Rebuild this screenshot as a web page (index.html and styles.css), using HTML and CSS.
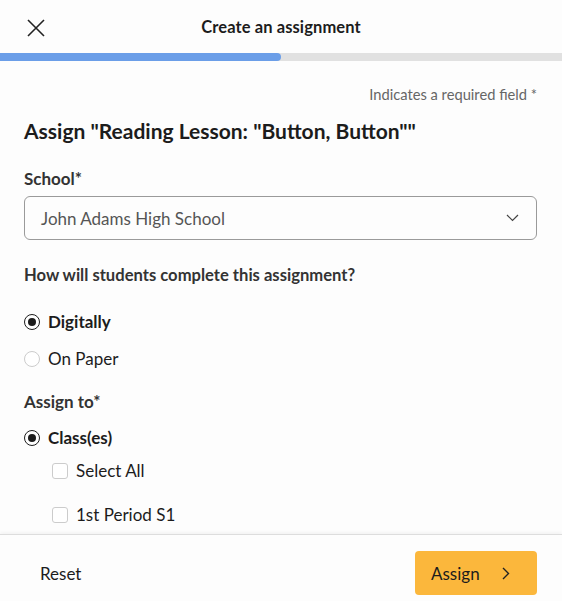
FILE: index.html
```html
<!DOCTYPE html>
<html lang="en">
<head>
<meta charset="utf-8">
<title>Create an assignment</title>
<link rel="stylesheet" href="styles.css">
</head>
<body>
<div class="modal">
  <header class="topbar">
    <button class="close" aria-label="Close">
      <svg width="18" height="18" viewBox="0 0 18 18"><path d="M1 1L17 17M17 1L1 17" stroke="#222" stroke-width="1.6" fill="none"/></svg>
    </button>
    <h1 class="title">Create an assignment</h1>
  </header>
  <div class="progress"><div class="progress-fill" style="width:50%"></div></div>
  <main class="content">
    <p class="required-note">Indicates a required field *</p>
    <h2 class="heading">Assign "Reading Lesson: "Button, Button""</h2>
    <div class="field">
      <label class="label">School*</label>
      <div class="select">
        <span>John Adams High School</span>
        <svg width="13" height="8" viewBox="0 0 13 8"><path d="M1 1L6.5 6.5L12 1" stroke="#444" stroke-width="1.2" fill="none"/></svg>
      </div>
    </div>
    <p class="question">How will students complete this assignment?</p>
    <div class="radio-row"><span class="radio checked"></span><span class="opt bold">Digitally</span></div>
    <div class="radio-row"><span class="radio"></span><span class="opt">On Paper</span></div>
    <p class="label assign-to">Assign to*</p>
    <div class="radio-row"><span class="radio checked"></span><span class="opt bold">Class(es)</span></div>
    <div class="check-row"><span class="check"></span><span class="opt">Select All</span></div>
    <div class="check-row"><span class="check"></span><span class="opt">1st Period S1</span></div>
  </main>
  <footer class="footer">
    <button class="reset">Reset</button>
    <button class="assign">Assign
      <svg width="8" height="13" viewBox="0 0 8 13"><path d="M1 1L6.5 6.5L1 12" stroke="#222" stroke-width="1.4" fill="none"/></svg>
    </button>
  </footer>
</div>
</body>
</html>
```
FILE: styles.css
```css
* { box-sizing: border-box; }
html, body { margin: 0; padding: 0; }
body {
  font-family: Lato, "Open Sans", sans-serif;
  color: #1c1c1c;
  background: #fdfdfd;
  width: 562px;
  height: 601px;
  overflow: hidden;
}
.modal { display: flex; flex-direction: column; height: 601px; }
.topbar {
  height: 53px;
  position: relative;
  display: flex;
  align-items: center;
  justify-content: center;
}
.close {
  position: absolute;
  left: 27px;
  top: 19px;
  padding: 0;
  border: 0;
  background: none;
  width: 18px;
  height: 18px;
  display: flex;
}
.title { margin: 0; font-size: 16.5px; font-weight: 700; letter-spacing: 0.1px; }
.progress { height: 8px; background: #e1e1e1; }
.progress-fill { height: 100%; background: #6b9ee8; border-radius: 0 4px 4px 0; }
.content { flex: 1; padding: 0 25px 0 24px; overflow: hidden; }
.required-note {
  margin: 24px 0 0;
  text-align: right;
  font-size: 14.7px;
  color: #666;
  line-height: 18px;
}
.heading { margin: 16px 0 0; font-size: 21px; font-weight: 700; line-height: 24px; }
.field { margin-top: 26px; }
.label { display: block; font-size: 17px; font-weight: 700; color: #333; line-height: 20px; margin: 0; }
.select {
  margin-top: 7px;
  height: 44px;
  border: 1px solid #9a9a9a;
  border-radius: 6px;
  display: flex;
  align-items: center;
  justify-content: space-between;
  padding: 0 17px 0 16px;
  font-size: 17px;
  color: #555;
}
.question { margin: 25px 0 0; font-size: 16.6px; font-weight: 700; color: #333; line-height: 20px; }
.radio-row, .check-row { display: flex; align-items: center; gap: 8px; height: 20px; }
.radio-row { margin-top: 17px; }
.question + .radio-row { margin-top: 27px; }
.radio {
  width: 16px; height: 16px;
  border: 1px solid #ccc;
  border-radius: 50%;
  background: #fff;
  position: relative;
}
.radio.checked { border: 1.5px solid #1c1c1c; }
.radio.checked::after {
  content: "";
  position: absolute;
  left: 2.5px; top: 2.5px;
  width: 8px; height: 8px;
  border-radius: 50%;
  background: #1c1c1c;
}
.opt { font-size: 17px; line-height: 20px; }
.bold { font-weight: 700; }
.assign-to { margin-top: 23px; }
.assign-to + .radio-row { margin-top: 16px; }
.check-row { margin-left: 28px; margin-top: 13px; }
.check-row + .check-row { margin-top: 24px; }
.check { width: 16px; height: 16px; border: 1px solid #ccc; border-radius: 3px; background: #fff; }
.footer {
  height: 67px;
  border-top: 1px solid #ddd;
  box-shadow: 0 -2px 3px rgba(0,0,0,0.04);
  display: flex;
  align-items: flex-start;
  justify-content: space-between;
  padding: 16px 25px 0 40px;
}
.reset { border: 0; background: none; padding: 0; font: inherit; font-size: 17px; line-height: 46px; height: 46px; color: #1c1c1c; }
.assign {
  width: 122px;
  height: 44px;
  border: 0;
  border-radius: 4px;
  background: #fbb73c;
  font: inherit;
  font-size: 17px;
  color: #1c1c1c;
  display: flex;
  align-items: center;
  justify-content: space-between;
  padding: 0 27px 0 16px;
}
```
